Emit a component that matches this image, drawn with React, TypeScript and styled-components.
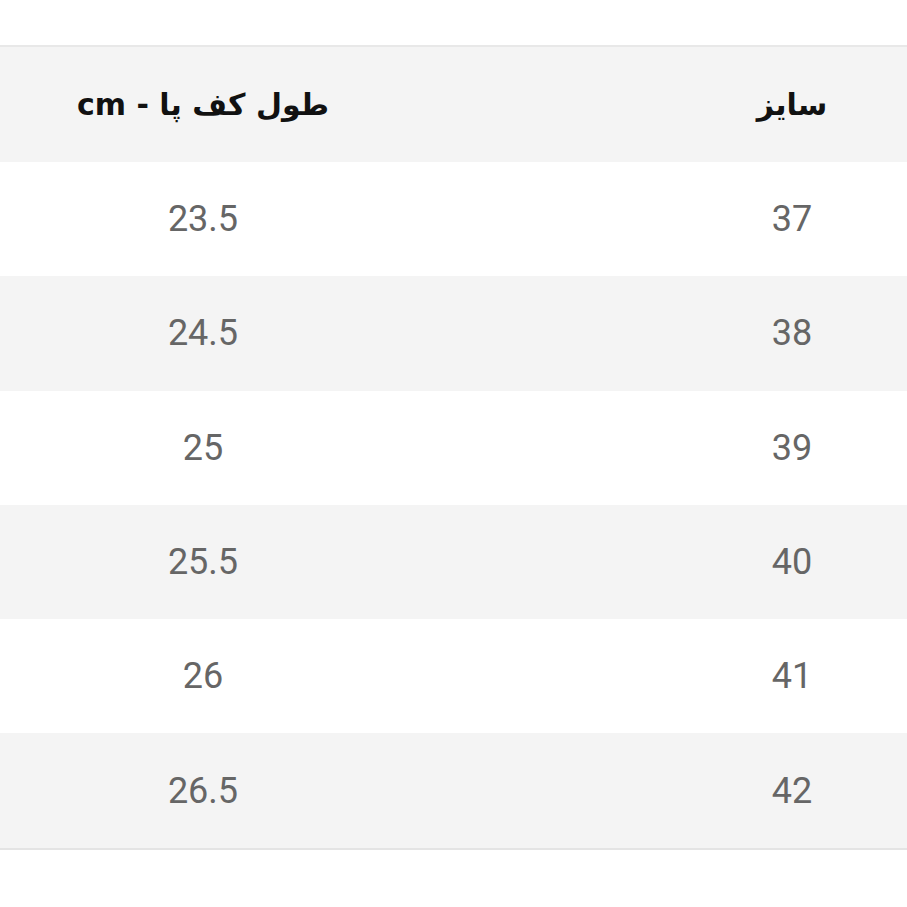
import styled, { createGlobalStyle } from "styled-components";

const GlobalStyle = createGlobalStyle`
  html, body {
    margin: 0;
    padding: 0;
    background: #ffffff;
  }
`;

const rows: [string, string][] = [
  ["37", "23.5"],
  ["38", "24.5"],
  ["39", "25"],
  ["40", "25.5"],
  ["41", "26"],
  ["42", "26.5"],
];

const Page = styled.div`
  width: 907px;
  height: 907px;
  padding-top: 45px;
  box-sizing: border-box;
  overflow: hidden;
`;

const Table = styled.div`
  direction: rtl;
  display: flex;
  flex-direction: column;
  border-top: 2px solid #e8e8e8;
  border-bottom: 2px solid #e4e4e4;
`;

const Row = styled.div<{ $shaded: boolean; $head?: boolean }>`
  display: grid;
  grid-template-columns: 230px 1fr 406px;
  align-items: center;
  height: ${(p) => (p.$head ? "115px" : "114.3px")};
  background: ${(p) => (p.$shaded ? "#f4f4f4" : "#ffffff")};
`;

const Cell = styled.div<{ $col: number; $head?: boolean }>`
  grid-column: ${(p) => (p.$col === 0 ? 1 : 3)};
  text-align: center;
  font-family: ${(p) =>
    p.$head ? '"DejaVu Sans", "Noto Sans", sans-serif' : 'Roboto, "Liberation Sans", sans-serif'};
  font-weight: ${(p) => (p.$head ? 700 : 400)};
  font-size: ${(p) => (p.$head ? "30px" : "36px")};
  color: ${(p) => (p.$head ? "#111111" : "#666666")};
  white-space: nowrap;
`;

export default function App() {
  return (
    <Page>
      <GlobalStyle />
      <Table>
        <Row $shaded $head>
          <Cell $col={0} $head>
            سایز
          </Cell>
          <Cell $col={1} $head>
            طول کف پا - cm
          </Cell>
        </Row>
        {rows.map(([size, length], i) => (
          <Row key={size} $shaded={i % 2 === 1}>
            <Cell $col={0}>{size}</Cell>
            <Cell $col={1}>{length}</Cell>
          </Row>
        ))}
      </Table>
    </Page>
  );
}
